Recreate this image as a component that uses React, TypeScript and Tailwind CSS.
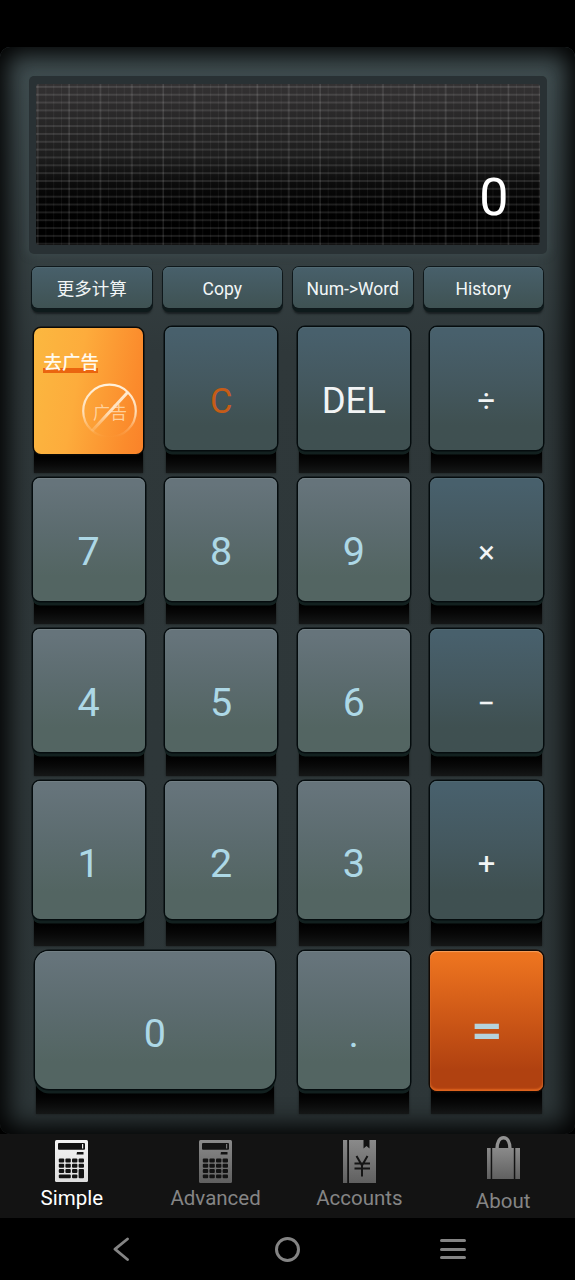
import type { ReactNode } from 'react';
import clsx from 'clsx';

type KeyTone = 'number' | 'operator' | 'equals';

const FONT = "font-['Roboto','Noto_Sans_CJK_SC',sans-serif]";

const Key = ({
  label,
  tone,
  textClass,
  capClass = 'h-[123px] pt-[25px]',
  wide = false,
}: {
  label: string;
  tone: KeyTone;
  textClass: string;
  capClass?: string;
  wide?: boolean;
}) => (
  <div className={clsx('flex flex-col', wide ? 'col-span-2 pr-[3px] pl-[3px]' : 'px-[0.5px]')}>
    <button
      className={clsx(
        'relative z-10 flex w-full shrink-0 items-center justify-center leading-none',
        capClass,
        wide ? 'rounded-[14px]' : 'rounded-[7px]',
        tone === 'number' &&
          'bg-linear-to-b from-[#66747b] from-5% via-[#5b6b6e] via-45% to-[#536562] to-80% shadow-[inset_0_1px_0_#727f84,0_0_0_1.5px_#050c0e,0_4px_0_0.5px_#12201f]',
        tone === 'operator' &&
          'bg-linear-to-b from-[#48606c] from-5% via-[#44585f] via-45% to-[#3f5051] to-80% shadow-[inset_0_1px_0_#506871,0_0_0_1.5px_#050c0e,0_4px_0_0.5px_#12201f]',
        tone === 'equals' &&
          'bg-linear-to-b from-[#ec731f] from-5% via-[#cf5917] via-45% to-[#b04110] to-85% shadow-[inset_0_1px_1px_#f7a05c,inset_0_-2px_2px_#e0651f,0_0_0_1.5px_#140a04]',
      )}
    >
      <span className={textClass}>{label}</span>
    </button>
    <div className="mx-px -mt-1 mb-[5px] flex-1 bg-linear-to-b from-black via-[#050505] to-[#151717] shadow-[0_0_2px_#151717]" />
  </div>
);

const AdKey = () => (
  <div className="flex flex-col px-[2px] pt-px">
    <button className="relative z-10 block h-[126px] w-full shrink-0 rounded-[7px] bg-linear-[100deg,#fbb840,#fdac3c_40%,#fb8b2c_85%,#fa8229] shadow-[0_0_0_1.5px_#0a0906]">
      <span className="absolute top-[39.5px] left-[9px] h-[5px] w-[55px] bg-[#ea650f]" />
      <span className="absolute top-[25px] left-[9.5px] text-[18.5px] leading-[20px] font-medium text-[#fffaf0]">
        去广告
      </span>
      <span className="absolute top-[75px] left-[59px] text-[17px] leading-[20px] text-[#ffdcb0]/85">
        广告
      </span>
      <svg className="absolute top-[54px] left-[47px]" width="58" height="58" viewBox="0 0 58 58" fill="none">
        <defs>
          <linearGradient id="ring" x1="0" y1="0" x2="0" y2="58" gradientUnits="userSpaceOnUse">
            <stop offset="0" stopColor="#fff3e0" />
            <stop offset=".55" stopColor="#ffe3c0" stopOpacity=".9" />
            <stop offset=".95" stopColor="#ffc98a" stopOpacity="0" />
          </linearGradient>
        </defs>
        <circle cx="28.5" cy="29" r="26.3" stroke="url(#ring)" strokeWidth="2.2" />
        <path d="M46.5 10.5 11 49" stroke="url(#ring)" strokeWidth="3" />
      </svg>
    </button>
    <div className="-mt-1 mb-[5px] flex-1 bg-linear-to-b from-black via-[#050505] to-[#151717] shadow-[0_0_2px_#151717]" />
  </div>
);

const DIGIT = 'text-[39.5px] text-[#add8e6]';
const OPERATOR = 'text-[31px] text-[#f2f4f5]';

const functionKeys = ['更多计算', 'Copy', 'Num->Word', 'History'];

const CalculatorIcon = ({ active = false }: { active?: boolean }) => {
  const dots = [0, 1, 2, 3].flatMap((row) => [0, 1, 2, 3].map((col) => ({ row, col })));
  return (
    <svg width="33" height={active ? 42 : 43} viewBox={active ? '0 0 33 42' : '0 0 33 43'}>
      <rect width="33" height={active ? 42 : 43} rx="1.5" fill={active ? 'url(#lit)' : 'url(#dim)'} />
      <rect x="3" y="3" width="27" height="6.7" rx="1" fill="#131313" />
      <rect x="27" y="4" width="1.2" height="4.5" fill={active ? '#eee' : '#777'} />
      <path d="M22 12h6.5v2.5h-7z" fill="#131313" />
      {dots
        .filter(({ row, col }) => !active || (row < 3 && !(row === 2 && col === 3)) || (row === 3 && col === 2))
        .map(({ row, col }) => (
          <rect
            key={`${row}-${col}`}
            x={3.8 + col * 6.6}
            y={18.5 + row * 5.3}
            width="5.4"
            height="3.9"
            rx="1"
            fill="#131313"
          />
        ))}
      {active && (
        <>
          <rect x="3.8" y="34.4" width="12" height="3.9" rx="1" fill="#131313" />
          <rect x="23.6" y="29.1" width="5.4" height="9.2" rx="1" fill="#131313" />
        </>
      )}
    </svg>
  );
};

const AccountsIcon = () => (
  <svg width="33" height="43" viewBox="0 0 33 43">
    <path d="M0 0h4.2v43H0zM6 0h14.5v8.5l3-2.5 3 2.5V0H33v43H6z" fill="url(#dim)" />
    <path
      d="M13.5 16 19 25.5 24.5 16M19 25.5V36.5M11.5 23.5h15.5M11.5 28.5h15.5"
      fill="none"
      stroke="#151515"
      strokeWidth="2"
    />
  </svg>
);

const AboutIcon = () => (
  <svg width="33" height="44" viewBox="0 0 33 44">
    <path d="M10 13c0-7 2.5-11.3 6.5-11.3S23 6 23 13" fill="none" stroke="#929292" strokeWidth="3.4" />
    <path d="M0 12h3.7v31H0zM5.2 12h21.6v31H5.2zM28.3 12H33v31h-4.7z" fill="url(#dim)" />
  </svg>
);

const Tab = ({
  label,
  icon,
  active = false,
  className,
}: {
  label: string;
  icon: ReactNode;
  active?: boolean;
  className: string;
}) => (
  <button className={clsx('flex flex-1 flex-col items-center', className)}>
    {icon}
    <span className={clsx('text-[20.5px] leading-6', active ? 'text-white' : 'text-[#858585]')}>{label}</span>
  </button>
);

const App = () => {
  return (
    <div className={clsx('flex h-[1280px] w-[575px] flex-col overflow-hidden bg-black', FONT)}>
      <svg width="0" height="0" className="absolute">
        <defs>
          <linearGradient id="lit" x1="0" y1="0" x2="0" y2="1">
            <stop offset="0" stopColor="#f4f4f4" />
            <stop offset="1" stopColor="#dedede" />
          </linearGradient>
          <linearGradient id="dim" x1="0" y1="0" x2="0" y2="1">
            <stop offset="0" stopColor="#8a8a8a" />
            <stop offset="1" stopColor="#606060" />
          </linearGradient>
        </defs>
      </svg>

      <main className="mt-[47px] flex h-[1087px] shrink-0 flex-col rounded-[10px] bg-linear-to-b from-[#425053] via-[#2f383a] via-28% to-[#2d3638] shadow-[inset_0_0_24px_8px_#000]">
        {/* display */}
        <div className="mt-[28.5px] mr-[28px] ml-[28.5px] h-[178px] shrink-0 rounded-[5px] bg-[#293134] px-[7.5px] pt-[8.5px] shadow-[0_0_8px_1px_#3c494b]">
          <div className="relative h-[161px] overflow-hidden rounded-[3px] bg-linear-to-b from-[#333132] via-[#1d1d1d] via-45% to-black to-95%">
            <div className="absolute inset-0 bg-[linear-gradient(to_right,transparent_29.4px,rgba(255,255,255,0.07)_29.4px),linear-gradient(to_right,transparent_6.85px,rgba(255,255,255,0.05)_6.85px),linear-gradient(to_bottom,transparent_6px,rgba(255,255,255,0.11)_6px)] bg-[size:31.4px_100%,7.85px_100%,100%_7.85px] bg-[position:2.5px_0,2.5px_0,0_-4px]" />
            <div className="relative pt-[84px] pr-[31px] text-right text-[52px] leading-[60px] text-white">0</div>
          </div>
        </div>

        <div className="mt-[13.5px] mr-[32px] ml-[32px] grid shrink-0 grid-cols-4 gap-[11px]">
          {functionKeys.map((label) => (
            <button
              key={label}
              className="h-[41px] rounded-[6px] bg-linear-to-b from-[#48606b] to-[#3f5253] pt-[3px] text-[17.5px] text-[#f2f6f7] shadow-[inset_0_1px_0_#506871,0_0_0_1px_#0f181b,0_3px_0_1px_#0e1a1b,0_6px_2px_0_#191f21]"
            >
              {label}
            </button>
          ))}
        </div>

        <div className="mt-[19px] mr-[32px] ml-[32px] grid shrink-0 grid-cols-4 grid-rows-[151px_151px_152px_170px_168px] gap-x-[19.5px]">
          <AdKey />
          <Key label="C" tone="operator" textClass="text-[34.5px] text-[#c65c17]" />
          <Key label="DEL" tone="operator" textClass="text-[36.5px] text-[#f2f4f5]" />
          <Key label="÷" tone="operator" textClass={OPERATOR} />

          {['7', '8', '9'].map((n) => (
            <Key key={n} label={n} tone="number" textClass={DIGIT} />
          ))}
          <Key label="×" tone="operator" textClass={OPERATOR} />

          {['4', '5', '6'].map((n) => (
            <Key key={n} label={n} tone="number" textClass={DIGIT} />
          ))}
          <Key label="−" tone="operator" textClass={OPERATOR} />

          {['1', '2', '3'].map((n) => (
            <Key key={n} label={n} tone="number" textClass={DIGIT} capClass="h-[138px] pt-[27px]" />
          ))}
          <Key label="+" tone="operator" textClass={OPERATOR} capClass="h-[138px] pt-[27px]" />

          <Key label="0" tone="number" textClass={DIGIT} capClass="h-[138px] pt-[27px]" wide />
          <Key label="." tone="number" textClass={DIGIT} capClass="h-[138px] pt-[27px]" />
          <Key
            label="="
            tone="equals"
            textClass="inline-block scale-x-115 text-[48px] font-bold text-[#b5d3dc]"
            capClass="h-[140px] pt-[19px]"
          />
        </div>
      </main>

      <nav className="z-10 flex h-[84px] shrink-0 bg-[#131313]">
        <Tab label="Simple" icon={<CalculatorIcon active />} active className="gap-[4px] pt-[6px]" />
        <Tab label="Advanced" icon={<CalculatorIcon />} className="gap-[3px] pt-[6px]" />
        <Tab label="Accounts" icon={<AccountsIcon />} className="gap-[3px] pt-[6px]" />
        <Tab label="About" icon={<AboutIcon />} className="gap-[9px] pt-[2px]" />
      </nav>

      {/* system bar */}
      <div className="flex h-[62px] shrink-0 items-center pl-[113px] text-[#848484]">
        <svg width="16" height="24" viewBox="0 0 16 24" fill="none" stroke="currentColor" strokeWidth="2.8">
          <path d="M14.5 2 2 12.2 14.5 22.5" strokeLinecap="round" strokeLinejoin="round" />
        </svg>
        <div className="ml-[146px] size-[25px] rounded-full border-[3px] border-current" />
        <div className="ml-[140px] flex w-[26px] flex-col gap-[5.5px]">
          <span className="h-[3px] rounded-full bg-current" />
          <span className="h-[3px] rounded-full bg-current" />
          <span className="h-[3px] rounded-full bg-current" />
        </div>
      </div>
    </div>
  );
};

export default App;
